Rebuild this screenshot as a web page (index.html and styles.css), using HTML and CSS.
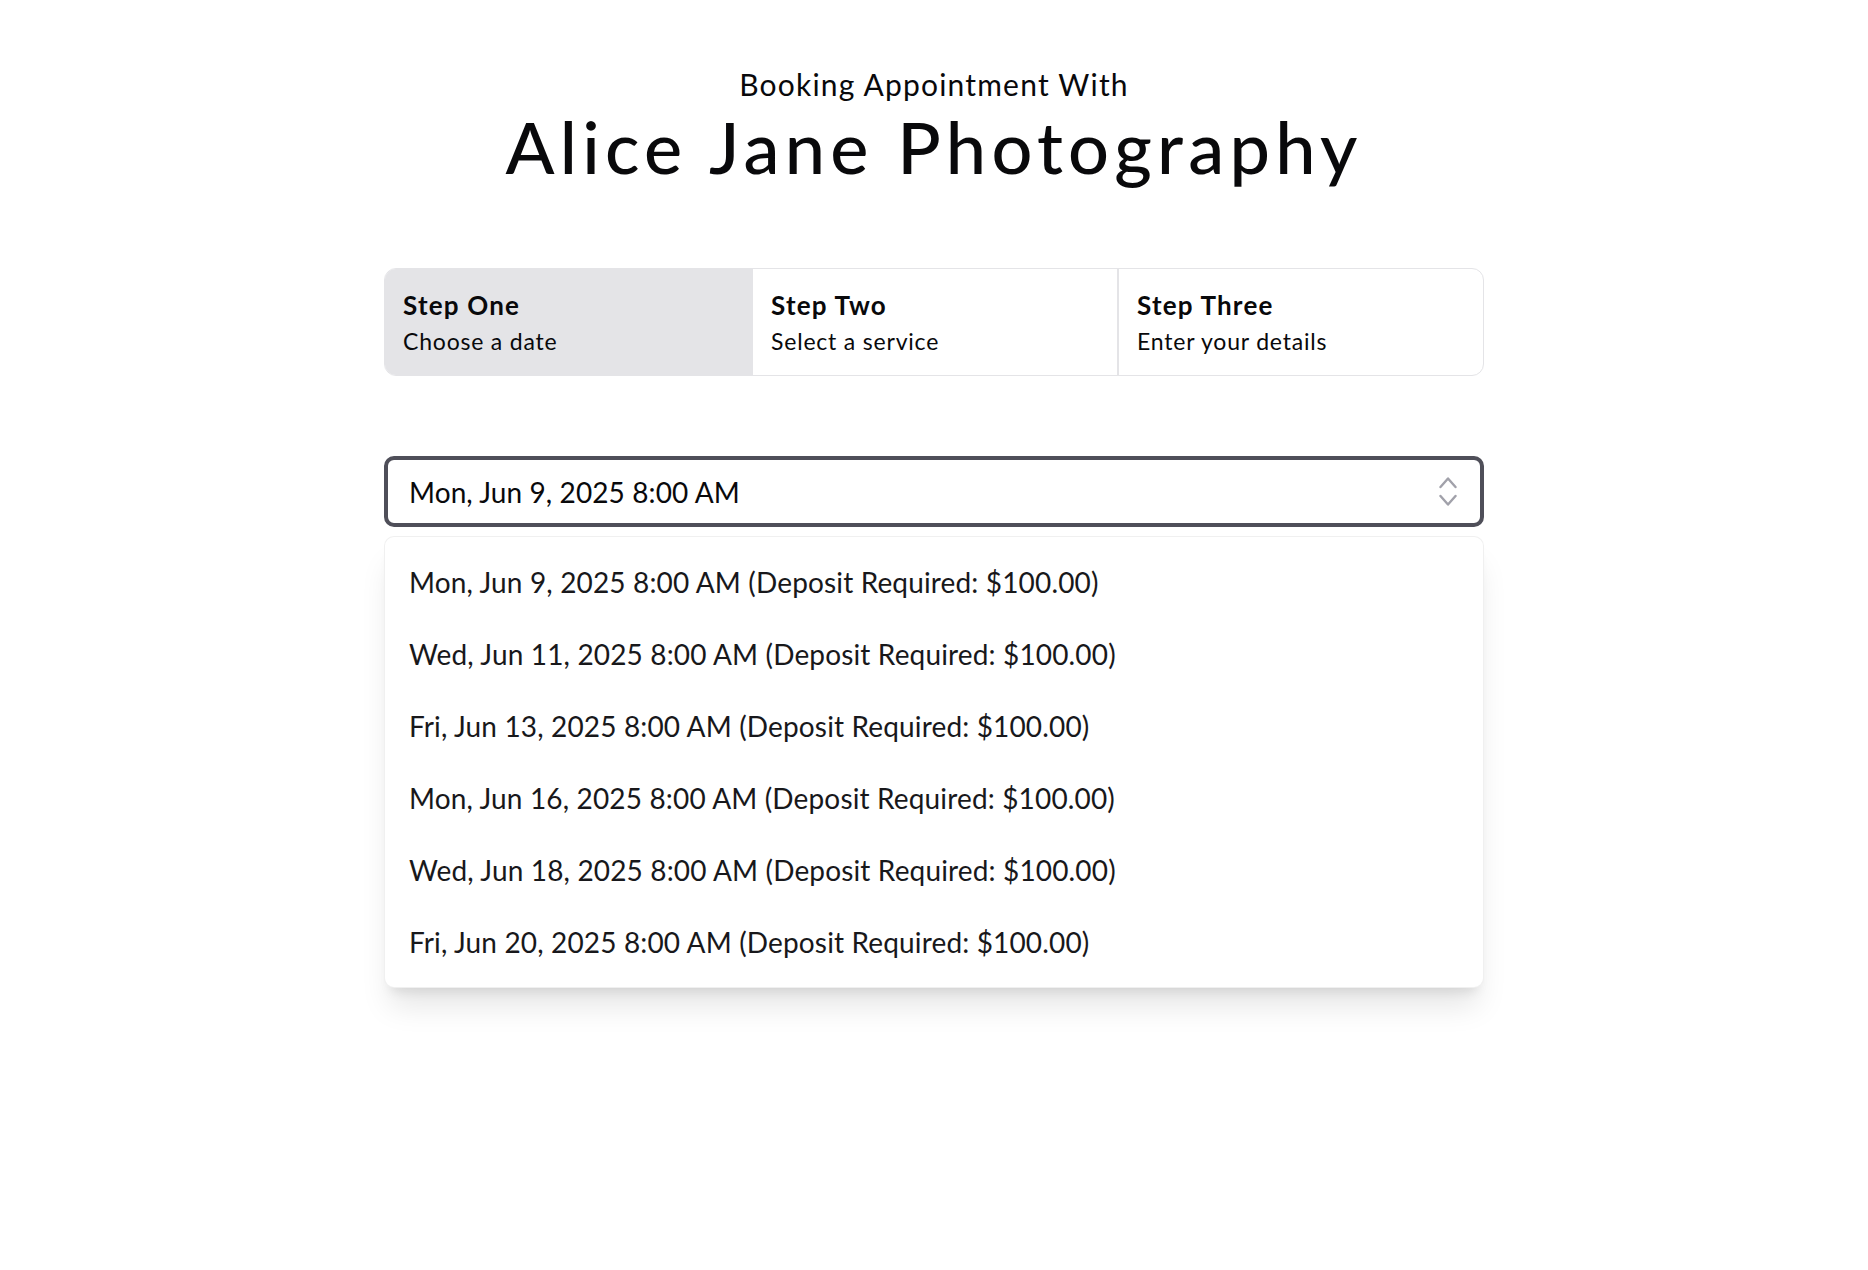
FILE: index.html
```html
<!DOCTYPE html>
<html lang="en">
<head>
<meta charset="utf-8">
<title>Booking Appointment With Alice Jane Photography</title>
<link rel="stylesheet" href="styles.css">
</head>
<body>
<main class="page">
  <header class="header">
    <p class="eyebrow">Booking Appointment With</p>
    <h1 class="title">Alice Jane Photography</h1>
  </header>

  <ol class="steps">
    <li class="step step-active">
      <span class="step-title">Step One</span>
      <span class="step-sub">Choose a date</span>
    </li>
    <li class="step">
      <span class="step-title">Step Two</span>
      <span class="step-sub">Select a service</span>
    </li>
    <li class="step">
      <span class="step-title">Step Three</span>
      <span class="step-sub">Enter your details</span>
    </li>
  </ol>

  <div class="picker">
    <button class="select" type="button">
      <span class="select-value">Mon, Jun 9, 2025 8:00 AM</span>
      <svg class="select-icon" width="18" height="29" viewBox="0 0 18 29" fill="none" stroke="currentColor" stroke-width="2.4" stroke-linecap="round" stroke-linejoin="round" aria-hidden="true">
        <path d="M1.5 10 L9 1.5 L16.5 10"/>
        <path d="M1.5 19 L9 27.5 L16.5 19"/>
      </svg>
    </button>
    <ul class="options">
      <li class="option">Mon, Jun 9, 2025 8:00 AM (Deposit Required: $100.00)</li>
      <li class="option">Wed, Jun 11, 2025 8:00 AM (Deposit Required: $100.00)</li>
      <li class="option">Fri, Jun 13, 2025 8:00 AM (Deposit Required: $100.00)</li>
      <li class="option">Mon, Jun 16, 2025 8:00 AM (Deposit Required: $100.00)</li>
      <li class="option">Wed, Jun 18, 2025 8:00 AM (Deposit Required: $100.00)</li>
      <li class="option">Fri, Jun 20, 2025 8:00 AM (Deposit Required: $100.00)</li>
    </ul>
  </div>
</main>
</body>
</html>
```

FILE: styles.css
```css
* {
  box-sizing: border-box;
}

html, body {
  margin: 0;
  padding: 0;
  background: #ffffff;
}

body {
  font-family: "Lato", "Noto Sans", sans-serif;
  color: #09090b;
  min-height: 1270px;
}

.page {
  width: 1100px;
  margin: 0 auto;
  padding-top: 64px;
}

.header {
  text-align: center;
}

.eyebrow {
  margin: 0;
  font-size: 30px;
  line-height: 40px;
  font-weight: 400;
  letter-spacing: 1.2px;
}

.title {
  margin: 0;
  font-size: 72px;
  line-height: 84px;
  font-weight: 500;
  letter-spacing: 5.3px;
}

.steps {
  list-style: none;
  margin: 80px 0 0;
  padding: 0;
  display: grid;
  grid-template-columns: repeat(3, 1fr);
  border: 1px solid #e4e4e7;
  border-radius: 12px;
  overflow: hidden;
}

.step {
  display: flex;
  flex-direction: column;
  padding: 18px 18px 0;
  height: 106px;
}

.step + .step {
  border-left: 2px solid #e4e4e7;
}

.step-active {
  background: #e4e4e7;
}

.step-title {
  font-size: 26px;
  line-height: 36px;
  font-weight: 700;
  letter-spacing: 1.2px;
}

.step-sub {
  font-size: 23px;
  line-height: 36px;
  font-weight: 400;
  letter-spacing: 0.8px;
}

.picker {
  margin-top: 80px;
}

.select {
  width: 100%;
  height: 71px;
  display: flex;
  align-items: center;
  justify-content: space-between;
  padding: 0 23px 0 21px;
  background: #ffffff;
  border: 4px solid #4f4f59;
  border-radius: 10px;
  font: inherit;
  color: inherit;
  text-align: left;
}

.select-value {
  font-size: 28px;
  letter-spacing: 0.1px;
}

.select-icon {
  color: #a1a1aa;
}

.options {
  list-style: none;
  margin: 9px 0 0;
  padding: 9px 0;
  border: 1px solid rgba(0, 0, 0, 0.06);
  border-radius: 10px;
  box-shadow: 0 24px 30px -6px rgba(0, 0, 0, 0.10), 0 10px 12px -7px rgba(0, 0, 0, 0.10);
  background: #ffffff;
}

.option {
  height: 72px;
  line-height: 72px;
  padding: 0 24px;
  font-size: 28px;
  letter-spacing: 0.15px;
  color: #18181b;
}
```
